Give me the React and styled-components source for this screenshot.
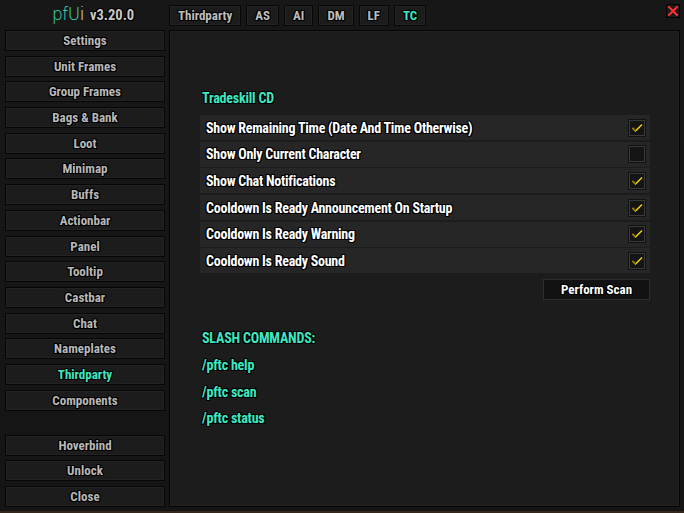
import styled, { createGlobalStyle } from "styled-components";

const GlobalStyle = createGlobalStyle`
  html, body {
    margin: 0;
    padding: 0;
    background: #141414;
  }
  body {
    font-family: Roboto, "Open Sans", sans-serif;
    font-stretch: condensed;
  }
`;

const outline =
  "1px 1px 0 #000, -1px -1px 0 #000, 1px -1px 0 #000, -1px 1px 0 #000, 0 1px 0 #000, 1px 0 0 #000, 0 -1px 0 #000, -1px 0 0 #000";

const menu = [
  "Settings",
  "Unit Frames",
  "Group Frames",
  "Bags & Bank",
  "Loot",
  "Minimap",
  "Buffs",
  "Actionbar",
  "Panel",
  "Tooltip",
  "Castbar",
  "Chat",
  "Nameplates",
  "Thirdparty",
  "Components",
];

const bottomMenu = ["Hoverbind", "Unlock", "Close"];

const tabs = ["Thirdparty", "AS", "AI", "DM", "LF", "TC"];

const options = [
  { label: "Show Remaining Time (Date And Time Otherwise)", checked: true },
  { label: "Show Only Current Character", checked: false },
  { label: "Show Chat Notifications", checked: true },
  { label: "Cooldown Is Ready Announcement On Startup", checked: true },
  { label: "Cooldown Is Ready Warning", checked: true },
  { label: "Cooldown Is Ready Sound", checked: true },
];

const commands = ["/pftc help", "/pftc scan", "/pftc status"];

export default function App() {
  return (
    <>
      <GlobalStyle />
      <Window>
        <Logo>
          <LogoMark>
            pfU<span>i</span>
          </LogoMark>
          <Version>v3.20.0</Version>
        </Logo>
        <TabBar>
          {tabs.map((t) => (
            <Tab key={t} $active={t === "TC"}>
              {t}
            </Tab>
          ))}
          <CloseBox aria-label="close">
            <svg width="10" height="10" viewBox="0 0 10 10">
              <path
                d="M1 1 L9 9 M9 1 L1 9"
                stroke="#ff3030"
                strokeWidth="2"
                strokeLinecap="square"
              />
            </svg>
          </CloseBox>
        </TabBar>
        <Sidebar>
          <MenuGroup>
            {menu.map((m) => (
              <MenuButton key={m} $active={m === "Thirdparty"}>
                {m}
              </MenuButton>
            ))}
          </MenuGroup>
          <MenuGroup>
            {bottomMenu.map((m) => (
              <MenuButton key={m}>{m}</MenuButton>
            ))}
          </MenuGroup>
        </Sidebar>
        <Panel>
          <Heading>Tradeskill CD</Heading>
          <OptionList>
            {options.map((o) => (
              <OptionRow key={o.label}>
                <OptionLabel>{o.label}</OptionLabel>
                <CheckBox>
                  {o.checked && (
                    <svg width="12" height="10" viewBox="0 0 12 10">
                      <path
                        d="M1.5 5 L4.5 8 L11 1.5"
                        fill="none"
                        stroke="#f5d400"
                        strokeWidth="1.5"
                      />
                      <path d="M1.5 5 L4.5 8" stroke="#8a7400" strokeWidth="1.5" />
                    </svg>
                  )}
                </CheckBox>
              </OptionRow>
            ))}
          </OptionList>
          <ScanRow>
            <ScanButton>Perform Scan</ScanButton>
          </ScanRow>
          <Commands>
            <Heading as="div">SLASH COMMANDS:</Heading>
            {commands.map((c) => (
              <Command key={c}>{c}</Command>
            ))}
          </Commands>
        </Panel>
      </Window>
    </>
  );
}

const Window = styled.div`
  width: 684px;
  height: 513px;
  box-sizing: border-box;
  padding: 5px 4px 4px 5px;
  display: grid;
  grid-template-columns: 160px 1fr;
  grid-template-rows: 21px 1fr;
  column-gap: 4px;
  row-gap: 4px;
  background: linear-gradient(#171717, #151515);
  border-bottom: 2px solid #34261a;
`;

const Logo = styled.div`
  display: flex;
  align-items: center;
  padding-left: 47px;
  gap: 6px;
`;

const LogoMark = styled.span`
  font-family: "DejaVu Sans", sans-serif;
  font-stretch: normal;
  font-size: 17px;
  font-weight: 300;
  color: #3ee0bb;
  letter-spacing: -0.5px;
  margin-top: -3px;
  span {
    color: #f2f2f2;
  }
`;

const Version = styled.span`
  font-size: 14.5px;
  font-weight: bold;
  color: #c8c8c8;
  text-shadow: ${outline};
`;

const TabBar = styled.div`
  display: flex;
  align-items: stretch;
  gap: 5px;
`;

const Tab = styled.div`
  box-sizing: border-box;
  min-width: 28px;
  padding: 0 8px;
  display: flex;
  align-items: center;
  justify-content: center;
  border: 1px solid #080808;
  background: #1c1c1c;
  box-shadow: inset 0 0 0 1px #232323;
  font-size: 13px;
  font-weight: bold;
  color: ${(p) => (p.$active ? "#3ee8c2" : "#bdbdbd")};
  text-shadow: ${outline};
`;

const CloseBox = styled.div`
  margin-left: auto;
  margin-top: -1px;
  width: 14px;
  height: 14px;
  box-sizing: border-box;
  border: 1px solid #050505;
  background: #1a1a1a;
  display: flex;
  align-items: center;
  justify-content: center;
`;

const Sidebar = styled.div`
  display: flex;
  flex-direction: column;
  justify-content: space-between;
`;

const MenuGroup = styled.div`
  display: flex;
  flex-direction: column;
  gap: 4.7px;
`;

const MenuButton = styled.div`
  height: 21px;
  box-sizing: border-box;
  display: flex;
  align-items: center;
  justify-content: center;
  border: 1px solid #060606;
  background: #1c1c1c;
  box-shadow: inset 0 0 0 1px #222;
  font-size: 13px;
  font-weight: bold;
  color: ${(p) => (p.$active ? "#3ee8c2" : "#b8b8b8")};
  text-shadow: ${outline};
`;

const Panel = styled.div`
  box-sizing: border-box;
  border: 1px solid #050505;
  background: #1c1c1c;
  box-shadow: inset 0 0 0 1px #202020;
  padding: 58px 29px 0 32px;
  display: flex;
  flex-direction: column;
`;

const Heading = styled.h2`
  margin: 0;
  font-size: 14px;
  letter-spacing: -0.2px;
  font-weight: bold;
  color: #3ee8c2;
  text-shadow: ${outline};
  line-height: 18px;
`;

const OptionList = styled.div`
  margin: 8px 0 0 -2px;
  display: flex;
  flex-direction: column;
  gap: 1.7px;
`;

const OptionRow = styled.div`
  height: 25px;
  display: flex;
  align-items: center;
  justify-content: space-between;
  padding: 0 5px 0 6px;
  background: #262626;
`;

const OptionLabel = styled.span`
  font-size: 14px;
  letter-spacing: -0.25px;
  font-weight: bold;
  color: #ffffff;
  text-shadow: ${outline};
`;

const CheckBox = styled.div`
  width: 16px;
  height: 16px;
  box-sizing: border-box;
  border: 1px solid #3a3a3a;
  background: #141414;
  box-shadow: 0 0 0 1px #111;
  display: flex;
  align-items: center;
  justify-content: center;
`;

const ScanRow = styled.div`
  display: flex;
  justify-content: flex-end;
  margin-top: 6px;
`;

const ScanButton = styled.div`
  width: 107px;
  height: 21px;
  box-sizing: border-box;
  display: flex;
  align-items: center;
  justify-content: center;
  border: 1px solid #2e2e2e;
  background: #121212;
  font-size: 13px;
  font-weight: bold;
  color: #fff;
  text-shadow: ${outline};
`;

const Commands = styled.div`
  margin-top: 29px;
  display: flex;
  flex-direction: column;
  gap: 8.6px;
`;

const Command = styled.div`
  font-size: 14px;
  letter-spacing: -0.2px;
  font-weight: bold;
  color: #3ee8c2;
  text-shadow: ${outline};
  line-height: 18px;
`;
